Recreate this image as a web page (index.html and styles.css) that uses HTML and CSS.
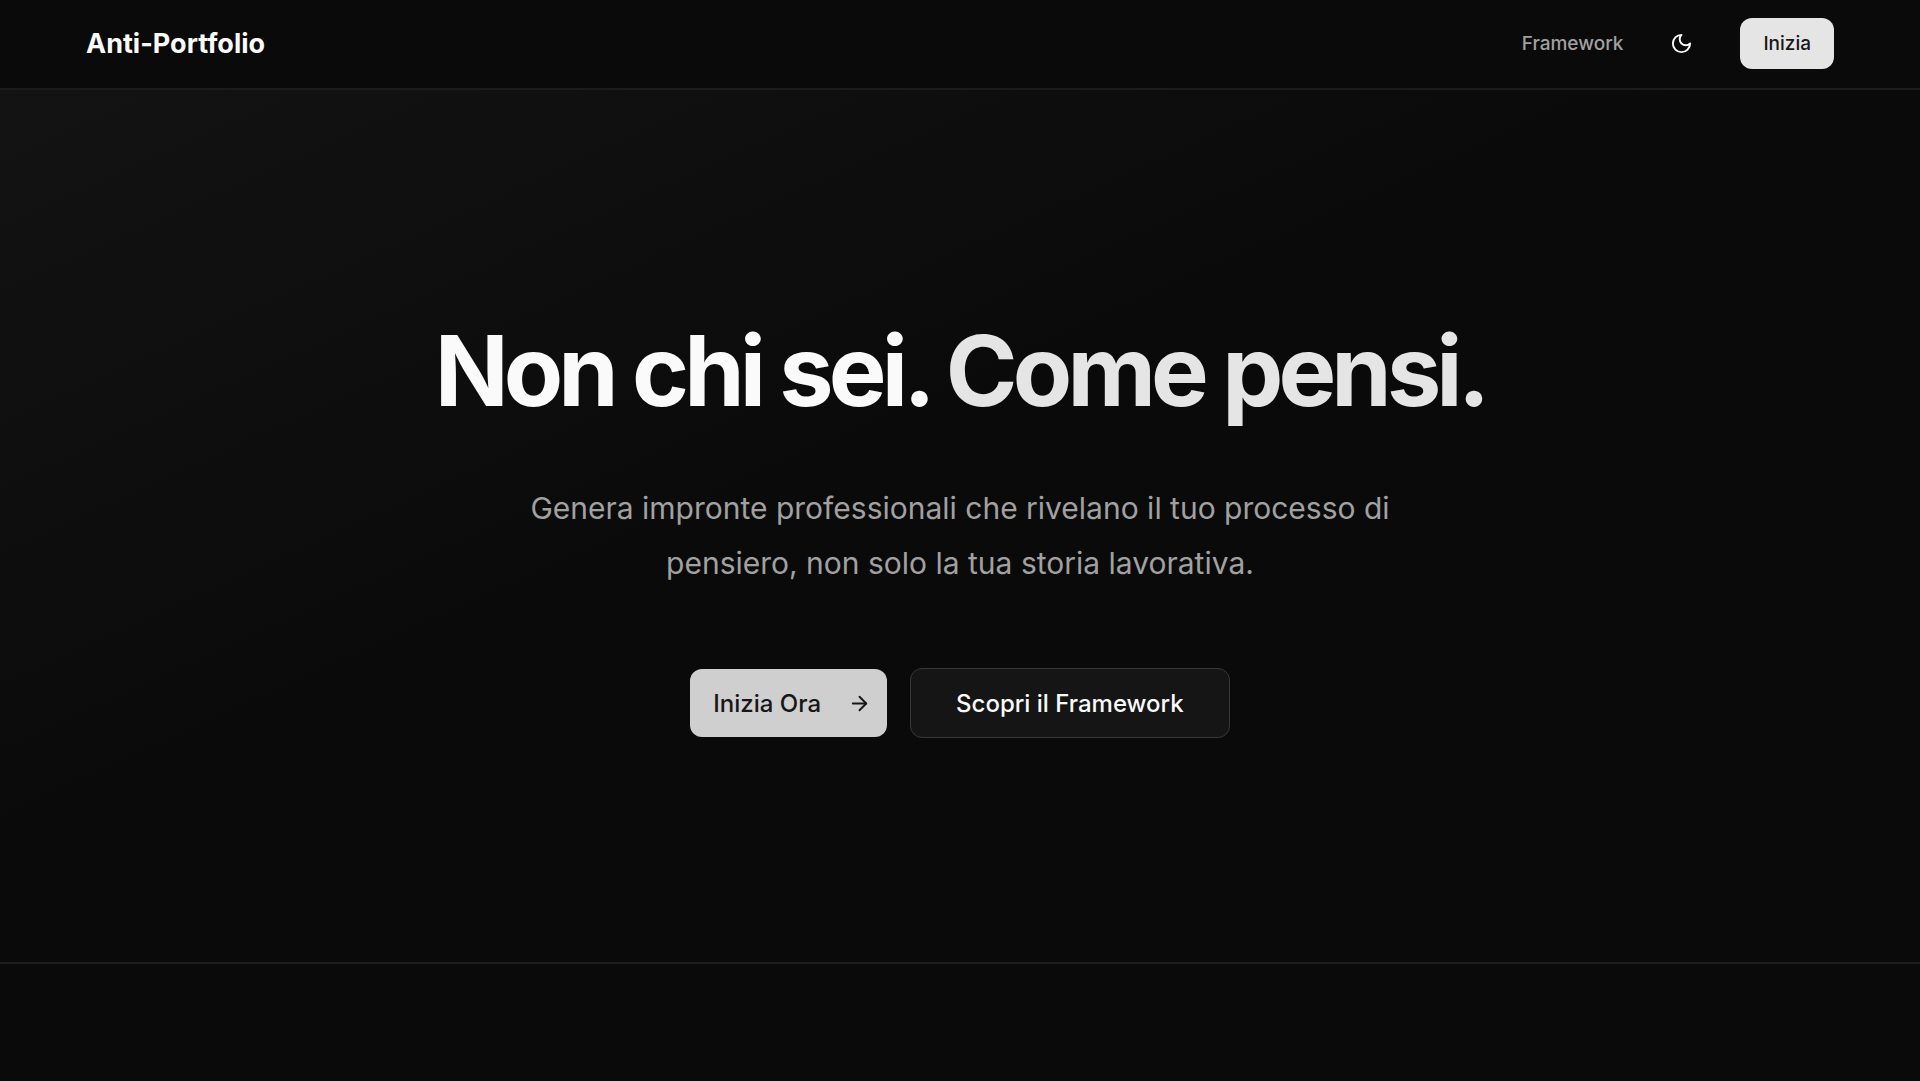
FILE: index.html
```html
<!DOCTYPE html>
<html lang="it">
<head>
    <meta charset="UTF-8">
    <meta name="viewport" content="width=device-width, initial-scale=1.0">
    <title>Anti-Portfolio</title>
    <link rel="stylesheet" href="styles.css">
</head>
<body>
    <header class="header">
        <a href="#" class="brand">Anti-Portfolio</a>
        <nav class="nav">
            <a href="#framework" class="nav-link">Framework</a>
            <button type="button" class="theme-toggle" aria-label="Cambia tema">
                <svg class="icon" viewBox="0 0 24 24" aria-hidden="true">
                    <path d="M12 3a6 6 0 0 0 9 9 9 9 0 1 1-9-9Z"/>
                </svg>
            </button>
            <button type="button" class="btn btn-small">Inizia</button>
        </nav>
    </header>
    <main>
        <section class="hero">
            <h1 class="hero-title">Non chi sei. <span class="accent">Come pensi.</span></h1>
            <p class="hero-text">Genera impronte professionali che rivelano il tuo processo di pensiero, non solo la tua storia lavorativa.</p>
            <div class="hero-actions">
                <button type="button" class="btn btn-primary">
                    Inizia Ora
                    <svg class="icon" viewBox="0 0 24 24" aria-hidden="true">
                        <path d="M5 12h14"/>
                        <path d="m12 5 7 7-7 7"/>
                    </svg>
                </button>
                <button type="button" class="btn btn-outline">Scopri il Framework</button>
            </div>
        </section>
        <section class="framework" id="framework"></section>
    </main>
</body>
</html>
```
FILE: styles.css
```css
* {
    box-sizing: border-box;
}

body {
    margin: 0;
    background: #0a0a0a;
    color: #fafafa;
    font-family: Inter, "Liberation Sans", sans-serif;
}

/* Header */
.header {
    display: flex;
    justify-content: space-between;
    align-items: center;
    padding: 18px 86px 19px;
    border-bottom: 2px solid #1c1c1c;
}

.brand {
    color: #fafafa;
    font-size: 27px;
    font-weight: 700;
    text-decoration: none;
}

.nav {
    display: flex;
    align-items: center;
    gap: 47px;
}

.nav-link {
    color: #a1a1a1;
    font-size: 19px;
    font-weight: 500;
    text-decoration: none;
}

.theme-toggle {
    display: flex;
    padding: 0;
    background: none;
    border: none;
    color: #fafafa;
    cursor: pointer;
}

.icon {
    width: 23px;
    height: 23px;
    fill: none;
    stroke: currentColor;
    stroke-width: 2;
    stroke-linecap: round;
    stroke-linejoin: round;
}

/* Buttons */
.btn {
    display: flex;
    align-items: center;
    border: none;
    border-radius: 12px;
    font-family: inherit;
    font-weight: 500;
    color: #171717;
    cursor: pointer;
}

.btn-small {
    height: 51px;
    padding: 0 23px;
    background: #e5e5e5;
    font-size: 19px;
}

.btn-primary {
    gap: 27px;
    height: 68px;
    padding: 0 16px 0 23px;
    background: #cfcfcf;
    font-size: 24px;
}

.btn-outline {
    height: 70px;
    padding: 0 45px;
    background: #151515;
    border: 1px solid #383838;
    color: #fafafa;
    font-size: 24px;
}

/* Hero */
.hero {
    display: flex;
    flex-direction: column;
    align-items: center;
    padding: 229px 24px 224px;
    background: linear-gradient(to bottom right, #131313, #0a0a0a 45%);
    border-bottom: 2px solid #1c1c1c;
    text-align: center;
}

.hero-title {
    margin: 0 0 58px;
    font-size: 97px;
    font-weight: 700;
    line-height: 104px;
    letter-spacing: -0.05em;
}

.accent {
    color: #e5e5e5;
}

.hero-text {
    max-width: 900px;
    margin: 0 0 77px;
    color: #a1a1a1;
    font-size: 30px;
    line-height: 55px;
}

.hero-actions {
    display: flex;
    align-items: center;
    gap: 23px;
}

.framework {
    padding: 48px 24px;
}
```
